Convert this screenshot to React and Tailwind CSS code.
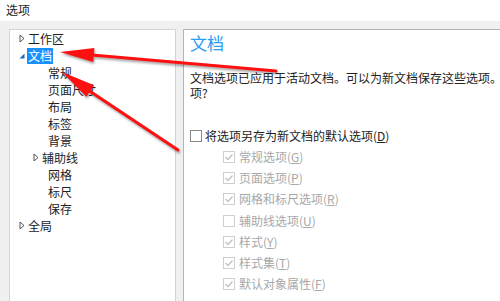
import React from "react";

const font = { fontFamily: '"Noto Sans CJK SC", "Noto Sans", sans-serif' };

function Collapsed() {
  return (
    <svg width="6" height="9" viewBox="0 0 6 9" className="shrink-0">
      <path d="M1 1 L5 4.5 L1 8 Z" fill="none" stroke="#555" strokeWidth="1" />
    </svg>
  );
}

function Expanded() {
  return (
    <svg width="6" height="9" viewBox="0 0 6 9" className="shrink-0">
      <path d="M0.5 7.5 L5.5 7.5 L5.5 2.5 Z" fill="#1e6fb8" />
    </svg>
  );
}

function TreeRow({ label, level, icon, selected }) {
  return (
    <div className={"flex items-center h-[17px] " + (level === 0 ? "pl-[9px]" : "pl-[23px]")}>
      <div className="w-[8px] flex items-center">
        {icon === "c" && <Collapsed />}
        {icon === "e" && <Expanded />}
      </div>
      <span
        className={
          "leading-[16px] px-[1px] " +
          (selected ? "bg-[#1a8fff] text-white" : "text-[#222]") +
          (level === 1 && !icon ? " ml-[6px]" : level === 1 ? " ml-0" : "")
        }
      >
        {label}
      </span>
    </div>
  );
}

function Check({ checked, disabled }) {
  const c = disabled ? "#c2c2c2" : "#333";
  return (
    <div
      className={
        "w-[12px] h-[12px] border bg-white flex items-center justify-center shrink-0 " +
        (disabled ? "border-[#cfcfcf]" : "border-[#8a8a8a]")
      }
    >
      {checked && (
        <svg width="10" height="10" viewBox="0 0 10 10">
          <path d="M1.5 5 L4 7.5 L8.5 2.5" fill="none" stroke={c} strokeWidth="1.3" />
        </svg>
      )}
    </div>
  );
}

function SubOption({ text, k, checked }) {
  return (
    <div className="flex items-center h-[21.3px] pl-[33px] gap-[4px] text-[#a8a8a8]">
      <Check checked={checked} disabled />
      <span>
        {text}(<u>{k}</u>)
      </span>
    </div>
  );
}

export default function App() {
  return (
    <div className="relative w-[500px] h-[301px] overflow-hidden bg-[#f0f0f0] text-[12px]" style={font}>
      <div className="h-[21px] bg-white pl-[6px] leading-[20px] text-[#222]">选项</div>
      <div className="flex pt-[8px] pl-[9px] gap-[7px]">
        <div className="w-[167px] h-[290px] shrink-0 bg-white border border-[#d4d4d4] pt-[0px]">
          <TreeRow label="工作区" level={0} icon="c" />
          <TreeRow label="文档" level={0} icon="e" selected />
          <TreeRow label="常规" level={1} />
          <TreeRow label="页面尺寸" level={1} />
          <TreeRow label="布局" level={1} />
          <TreeRow label="标签" level={1} />
          <TreeRow label="背景" level={1} />
          <TreeRow label="辅助线" level={1} icon="c" />
          <TreeRow label="网格" level={1} />
          <TreeRow label="标尺" level={1} />
          <TreeRow label="保存" level={1} />
          <TreeRow label="全局" level={0} icon="c" />
        </div>
        <div className="w-[360px] h-[290px] shrink-0 bg-white border border-[#b4b4b4] pl-[6px] pt-[1px]">
          <div className="text-[17px] leading-[24px] text-[#2a9df4]">文档</div>
          <div className="mt-[15px] leading-[15px] text-[#222]">
            <div className="whitespace-nowrap">文档选项已应用于活动文档。可以为新文档保存这些选项。是否</div>
            <div>项?</div>
          </div>
          <div className="mt-[25px] flex items-center h-[21px] gap-[3px] text-[#222]">
            <Check />
            <span>
              将选项另存为新文档的默认选项(<u>D</u>)
            </span>
          </div>
          <SubOption text="常规选项" k="G" checked />
          <SubOption text="页面选项" k="P" checked />
          <SubOption text="网格和标尺选项" k="R" checked />
          <SubOption text="辅助线选项" k="U" />
          <SubOption text="样式" k="Y" checked />
          <SubOption text="样式集" k="T" checked />
          <SubOption text="默认对象属性" k="F" checked />
        </div>
      </div>
      <svg className="absolute inset-0 pointer-events-none drop-shadow-[1px_2px_1px_rgba(0,0,0,0.35)]" width="500" height="301">
        <line x1="92" y1="55" x2="276" y2="71" stroke="#ff1010" strokeWidth="3" strokeLinecap="round" />
        <polygon points="60,52 93.2,62 94.4,48" fill="#ff1010" />
        <line x1="88" y1="90" x2="178" y2="150" stroke="#ff1010" strokeWidth="3" strokeLinecap="round" />
        <polygon points="62,72 86.3,96.8 94.1,85.2" fill="#ff1010" />
      </svg>
    </div>
  );
}
